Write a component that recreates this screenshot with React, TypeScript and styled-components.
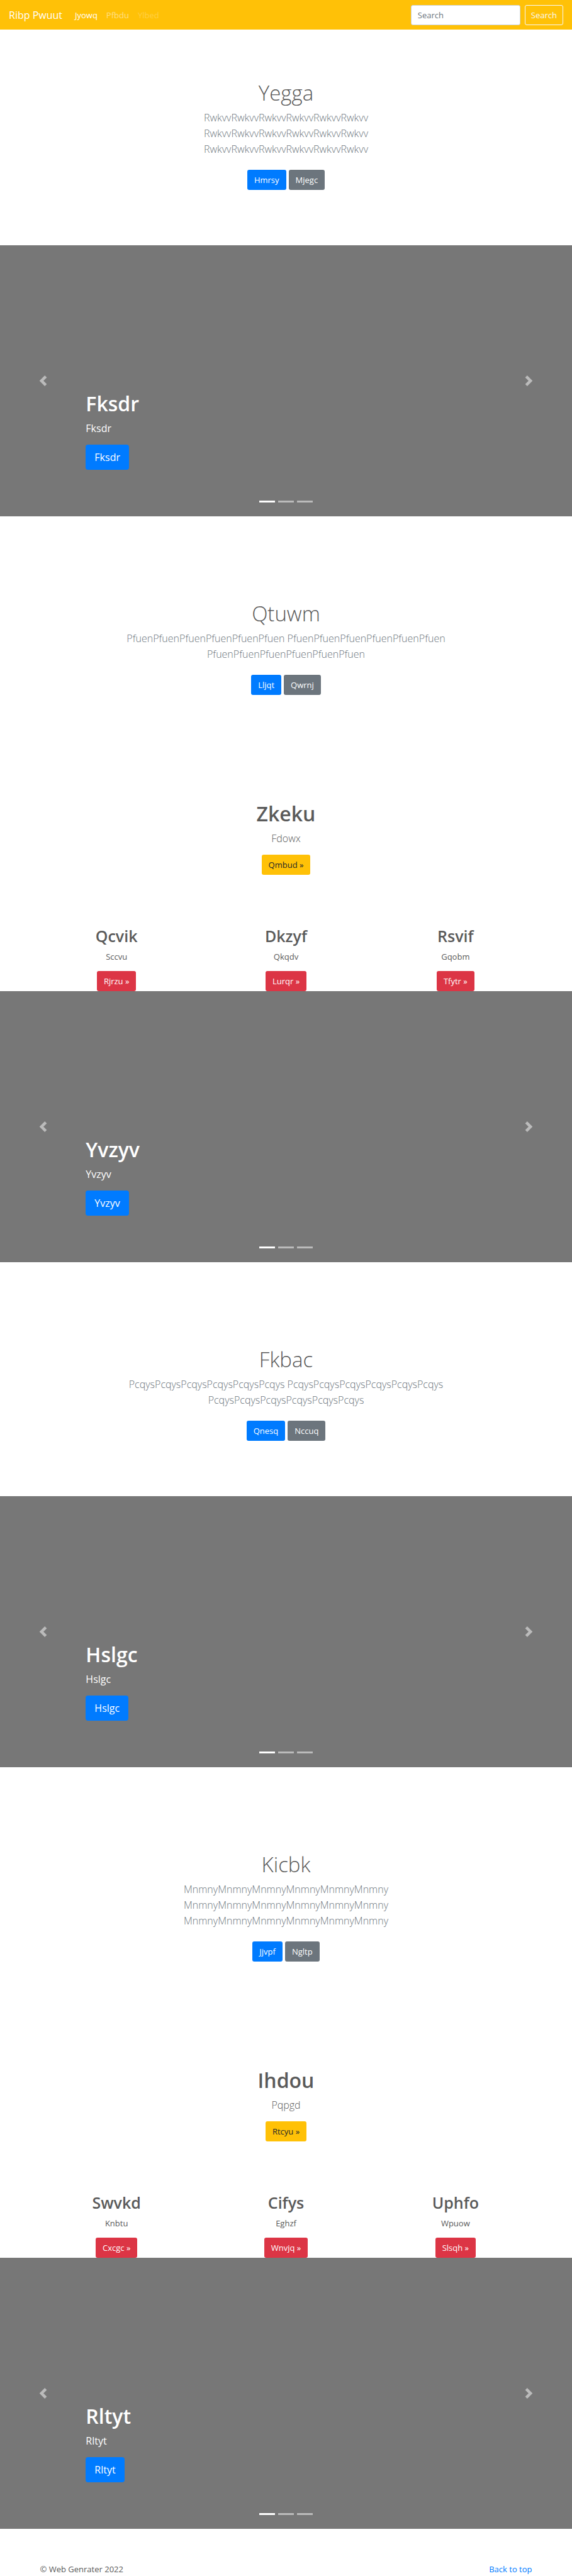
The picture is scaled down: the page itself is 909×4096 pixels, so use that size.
import React from "react";
import styled, { createGlobalStyle, css } from "styled-components";

const GlobalStyle = createGlobalStyle`
  *, *::before, *::after { box-sizing: border-box; }
  body {
    margin: 0;
    background: #fff;
    color: #5a5a5a;
    font-family: "Open Sans", "Noto Sans", sans-serif;
    font-size: 13px;
    line-height: 20px;
  }
  h1, h2, p { margin: 0; }
  button, input { font: inherit; }
`;

type Tone = "primary" | "secondary" | "warning" | "danger";

const tones: Record<Tone, { background: string; color: string }> = {
  primary: { background: "#007bff", color: "#fff" },
  secondary: { background: "#6c757d", color: "#fff" },
  warning: { background: "#ffc107", color: "#212529" },
  danger: { background: "#dc3545", color: "#fff" },
};

const Button = styled.button<{ $tone: Tone; $large?: boolean }>`
  border: 0;
  border-radius: 3px;
  height: 32px;
  padding: 0 11px;
  line-height: 20px;
  cursor: pointer;
  background: ${(p) => tones[p.$tone].background};
  color: ${(p) => tones[p.$tone].color};
  ${(p) =>
    p.$large &&
    css`
      height: 40px;
      padding: 0 14px;
      border-radius: 4px;
      font-size: 16px;
    `}
`;

const Navbar = styled.nav`
  display: flex;
  align-items: center;
  height: 47px;
  padding: 0 14px;
  background: #ffc107;
`;

const Brand = styled.a`
  margin-right: 20px;
  font-size: 16px;
  color: #fff;
  text-decoration: none;
`;

const NavList = styled.ul`
  display: flex;
  flex: 1;
  gap: 14px;
  margin: 0;
  padding: 0;
  list-style: none;
`;

const NavLink = styled.a<{ $opacity: number }>`
  color: rgba(255, 255, 255, ${(p) => p.$opacity});
  text-decoration: none;
`;

const SearchForm = styled.form`
  display: flex;
  gap: 7px;
`;

const SearchInput = styled.input`
  width: 174px;
  height: 32px;
  padding: 0 10px;
  border: 1px solid #ced4da;
  border-radius: 3px;
  background: #fff;
  color: #495057;
  &::placeholder {
    color: #6c757d;
    opacity: 1;
  }
`;

const SearchButton = styled.button`
  height: 32px;
  padding: 0 9px;
  border: 1px solid #f8f9fa;
  border-radius: 3px;
  background: transparent;
  color: #f8f9fa;
  cursor: pointer;
`;

const IntroSection = styled.section<{ $spaced?: boolean }>`
  margin-top: ${(p) => (p.$spaced ? 54 : 0)}px;
  padding: 81px 13px;
  text-align: center;
`;

const IntroBody = styled.div`
  max-width: 516px;
  margin: 0 auto;
`;

const Title = styled.h1<{ $light?: boolean }>`
  margin-bottom: 7px;
  font-size: ${(p) => (p.$light ? 33 : 32)}px;
  line-height: 40px;
  font-weight: ${(p) => (p.$light ? 300 : 600)};
`;

const Lead = styled.p<{ $muted?: boolean }>`
  margin-bottom: 13px;
  font-size: 16px;
  line-height: 25px;
  font-weight: 300;
  color: ${(p) => (p.$muted ? "#6c757d" : "inherit")};
`;

const Actions = styled.div`
  display: flex;
  justify-content: center;
  gap: 4px;
  padding: 7px 0;
`;

const CarouselFrame = styled.section`
  position: relative;
  height: 431px;
  background: #777;
  color: #fff;
`;

const Caption = styled.div`
  position: absolute;
  left: 15%;
  right: 15%;
  bottom: 74px;
`;

const CaptionText = styled.p`
  margin-bottom: 13px;
  font-size: 16px;
  line-height: 25px;
`;

const Control = styled.button<{ $side: "left" | "right" }>`
  position: absolute;
  top: 0;
  bottom: 0;
  ${(p) => p.$side}: 0;
  display: flex;
  align-items: center;
  justify-content: center;
  width: 15%;
  padding: 0;
  border: 0;
  background: none;
  color: #fff;
  opacity: 0.5;
  cursor: pointer;
`;

const Indicators = styled.div`
  position: absolute;
  left: 15%;
  right: 15%;
  bottom: 22px;
  display: flex;
  justify-content: center;
  gap: 5px;
`;

const Indicator = styled.button<{ $active: boolean }>`
  width: 25px;
  height: 3px;
  padding: 0;
  border: 0;
  background: #fff;
  opacity: ${(p) => (p.$active ? 1 : 0.5)};
`;

const FeatureHeader = styled.section`
  padding: 81px 13px;
  text-align: center;
`;

const FeatureRow = styled.div`
  display: grid;
  grid-template-columns: repeat(3, 1fr);
  max-width: 808px;
  margin: 0 auto;
  text-align: center;
`;

const Feature = styled.article`
  padding: 0 13px;
`;

const FeatureTitle = styled.h2`
  margin-bottom: 7px;
  font-size: 25px;
  line-height: 32px;
  font-weight: 600;
`;

const FeatureText = styled.p`
  margin-bottom: 13px;
`;

const Footer = styled.footer`
  display: flex;
  justify-content: space-between;
  max-width: 808px;
  margin: 0 auto;
  padding: 54px 13px 0;
`;

const FooterLink = styled.a`
  color: #007bff;
  text-decoration: none;
`;

function Chevron({ side }: { side: "left" | "right" }) {
  return (
    <svg width="17" height="17" viewBox="0 0 8 8" fill="currentColor" aria-hidden="true">
      {side === "left" ? (
        <path d="M5.25 0l-4 4 4 4 1.5-1.5-2.5-2.5 2.5-2.5-1.5-1.5z" />
      ) : (
        <path d="M2.75 0l-1.5 1.5 2.5 2.5-2.5 2.5 1.5 1.5 4-4-4-4z" />
      )}
    </svg>
  );
}

function Carousel({ label }: { label: string }) {
  return (
    <CarouselFrame>
      <Caption>
        <Title>{label}</Title>
        <CaptionText>{label}</CaptionText>
        <Button $tone="primary" $large>
          {label}
        </Button>
      </Caption>
      <Indicators>
        {[0, 1, 2].map((i) => (
          <Indicator key={i} $active={i === 0} aria-label={`Slide ${i + 1}`} />
        ))}
      </Indicators>
      <Control $side="left" aria-label="Previous">
        <Chevron side="left" />
      </Control>
      <Control $side="right" aria-label="Next">
        <Chevron side="right" />
      </Control>
    </CarouselFrame>
  );
}

interface IntroProps {
  title: string;
  word: string;
  actions: [string, string];
  spaced?: boolean;
}

function Intro({ title, word, actions, spaced }: IntroProps) {
  const phrase = word.repeat(6);
  return (
    <IntroSection $spaced={spaced}>
      <IntroBody>
        <Title $light>{title}</Title>
        <Lead $muted>{[phrase, phrase, phrase].join(" ")}</Lead>
        <Actions>
          <Button $tone="primary">{actions[0]}</Button>
          <Button $tone="secondary">{actions[1]}</Button>
        </Actions>
      </IntroBody>
    </IntroSection>
  );
}

interface FeaturesProps {
  title: string;
  lead: string;
  action: string;
  items: { title: string; text: string; action: string }[];
}

function Features({ title, lead, action, items }: FeaturesProps) {
  return (
    <>
      <FeatureHeader>
        <Title>{title}</Title>
        <Lead>{lead}</Lead>
        <Button $tone="warning">{action} »</Button>
      </FeatureHeader>
      <FeatureRow>
        {items.map((item) => (
          <Feature key={item.title}>
            <FeatureTitle>{item.title}</FeatureTitle>
            <FeatureText>{item.text}</FeatureText>
            <Button $tone="danger">{item.action} »</Button>
          </Feature>
        ))}
      </FeatureRow>
    </>
  );
}

export default function App() {
  return (
    <>
      <GlobalStyle />
      <Navbar id="top">
        <Brand href="#top">Ribp Pwuut</Brand>
        <NavList>
          <li>
            <NavLink href="#top" $opacity={1}>
              Jyowq
            </NavLink>
          </li>
          <li>
            <NavLink href="#top" $opacity={0.5}>
              Pfbdu
            </NavLink>
          </li>
          <li>
            <NavLink href="#top" $opacity={0.25} aria-disabled="true">
              Ylbed
            </NavLink>
          </li>
        </NavList>
        <SearchForm role="search" onSubmit={(e) => e.preventDefault()}>
          <SearchInput type="text" placeholder="Search" aria-label="Search" />
          <SearchButton type="submit">Search</SearchButton>
        </SearchForm>
      </Navbar>
      <main>
        <Intro title="Yegga" word="Rwkvv" actions={["Hmrsy", "Mjegc"]} />
        <Carousel label="Fksdr" />
        <Intro title="Qtuwm" word="Pfuen" actions={["Lljqt", "Qwrnj"]} spaced />
        <Features
          title="Zkeku"
          lead="Fdowx"
          action="Qmbud"
          items={[
            { title: "Qcvik", text: "Sccvu", action: "Rjrzu" },
            { title: "Dkzyf", text: "Qkqdv", action: "Lurqr" },
            { title: "Rsvif", text: "Gqobm", action: "Tfytr" },
          ]}
        />
        <Carousel label="Yvzyv" />
        <Intro title="Fkbac" word="Pcqys" actions={["Qnesq", "Nccuq"]} spaced />
        <Carousel label="Hslgc" />
        <Intro title="Kicbk" word="Mnmny" actions={["Jjvpf", "Ngltp"]} spaced />
        <Features
          title="Ihdou"
          lead="Pqpgd"
          action="Rtcyu"
          items={[
            { title: "Swvkd", text: "Knbtu", action: "Cxcgc" },
            { title: "Cifys", text: "Eghzf", action: "Wnvjq" },
            { title: "Uphfo", text: "Wpuow", action: "Slsqh" },
          ]}
        />
        <Carousel label="Rltyt" />
      </main>
      <Footer>
        <p>© Web Genrater 2022</p>
        <FooterLink href="#top">Back to top</FooterLink>
      </Footer>
    </>
  );
}
